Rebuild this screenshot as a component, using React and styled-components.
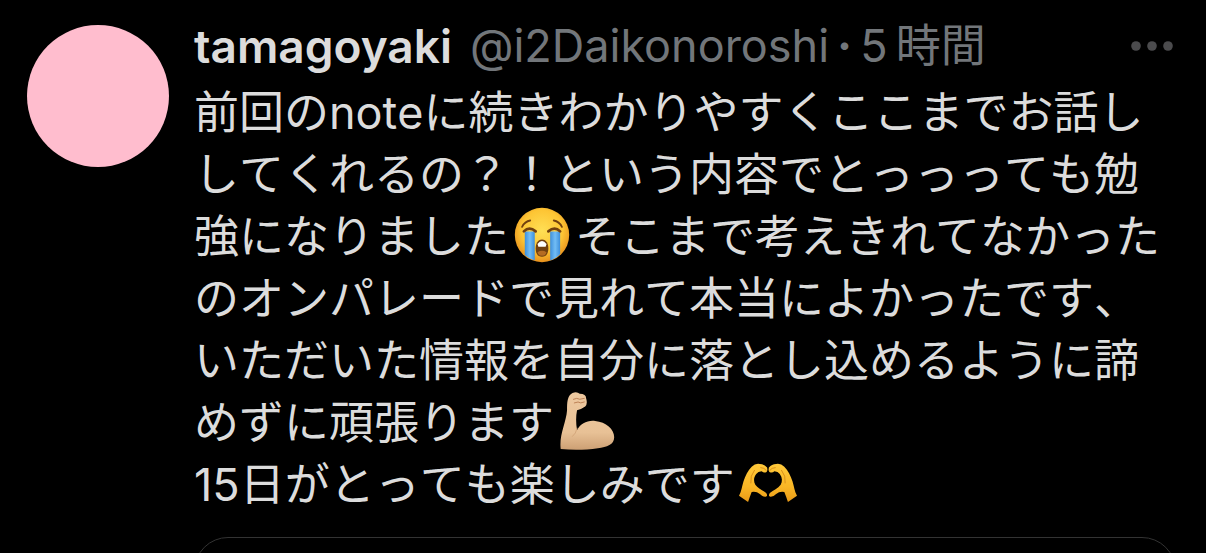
import styled, { createGlobalStyle } from 'styled-components'

const CryingFace = () => (
  <Emoji viewBox="0 0 64 64" role="img" aria-label="大泣き">
    <defs>
      <radialGradient id="face" cx="50%" cy="42%" r="58%">
        <stop offset="0" stopColor="#ffdf55" />
        <stop offset="0.65" stopColor="#fdc534" />
        <stop offset="1" stopColor="#e8901c" />
      </radialGradient>
      <linearGradient id="tear" x1="0" x2="1" y1="0" y2="0">
        <stop offset="0" stopColor="#3d8fdc" />
        <stop offset="0.5" stopColor="#72bdf5" />
        <stop offset="1" stopColor="#3d8fdc" />
      </linearGradient>
    </defs>
    <circle cx="32" cy="32" r="30" fill="url(#face)" />
    <path d="M13 28h11v32q-7-2-11-6z" fill="url(#tear)" />
    <path d="M41 28h11v25q-4 5-11 7z" fill="url(#tear)" />
    <g fill="none" stroke="#71400f" strokeLinecap="round">
      <path d="M10 23q3-6 9-7M54 23q-3-6-9-7" strokeWidth="2" />
      <path d="M12 28q6-6 13 0M39 28q7-6 13 0" strokeWidth="3" />
    </g>
    <path
      d="M32 37c5 0 7 5 7 10s-2 9-7 9-7-4-7-9 2-10 7-10z"
      fill="#71400f"
    />
    <path d="M27 42q5-7 10 0l-1 3h-8z" fill="#fff" />
    <path d="M27 51q5-3 10 0-1 4-5 4t-5-4z" fill="#b56b22" />
  </Emoji>
)

const FlexedArm = () => (
  <Emoji viewBox="0 0 64 64" role="img" aria-label="力こぶ">
    <defs>
      <linearGradient id="skin" x1="0" x2="0" y1="0" y2="1">
        <stop offset="0" stopColor="#edc89f" />
        <stop offset="0.7" stopColor="#e8c196" />
        <stop offset="1" stopColor="#cda074" />
      </linearGradient>
    </defs>
    <path
      d="M10 20C10 12 10 4 16 1q5-2 8 1 7 0 7 5 2 6-1 9-4 3-9 4-2 10 0 22c4-7 11-11 20-10 12 1 21 9 21 18 0 8-8 11-18 12-13 2-28 2-41 1C1 47 9 34 10 20z"
      fill="url(#skin)"
    />
    <path
      d="M17 8q4-2 7 0l5-1M18 12q5-2 7 0l4-1"
      fill="none"
      stroke="#b87c51"
      strokeWidth="1"
      strokeLinecap="round"
    />
    <path
      d="M21 40q-1 6-5 9"
      fill="none"
      stroke="#d2a377"
      strokeWidth="1"
      strokeLinecap="round"
    />
  </Emoji>
)

const HeartHands = () => (
  <Emoji viewBox="0 0 64 64" role="img" aria-label="ハートの手">
    <defs>
      <linearGradient id="hand" x1="0" x2="0" y1="0" y2="1">
        <stop offset="0" stopColor="#ffc93b" />
        <stop offset="0.6" stopColor="#f9b625" />
        <stop offset="1" stopColor="#e99a17" />
      </linearGradient>
      <g id="half">
        <path
          d="M0 46C3 41 3 36 5 30 7 24 10 18 14 14q4-4 9-3 5 0 8 4 1 4-1 5-3 1-5-1-4 0-6 3c-3 4-3 8-1 12 3 4 8 6 12 9q2 3 0 4-3 1-7-3-4-3-9-2-2 5-4 11z"
          fill="url(#hand)"
        />
        <path
          d="M24 15q4 0 6 3M17 18q-5 6-4 14"
          fill="none"
          stroke="#d58a16"
          strokeWidth="1"
          strokeLinecap="round"
        />
      </g>
    </defs>
    <use href="#half" />
    <use href="#half" transform="translate(64 0) scale(-1 1)" />
  </Emoji>
)

const App = () => {
  return (
    <>
      <GlobalStyle />
      <Post>
        <Avatar />
        <Content>
          <Header>
            <Name>tamagoyaki</Name>
            <Meta>@i2Daikonoroshi</Meta>
            <Dot>·</Dot>
            <Meta as="time">5{'\u2009'}時間</Meta>
            <MoreButton aria-label="その他">
              <svg width="42" height="10" viewBox="0 0 42 10">
                <circle cx="5" cy="5" r="4.8" />
                <circle cx="21" cy="5" r="4.8" />
                <circle cx="37" cy="5" r="4.8" />
              </svg>
            </MoreButton>
          </Header>
          <Text>
            前回のnoteに続きわかりやすくここまでお話し
            <br />
            してくれるの？！という内容でとっっっても勉
            <br />
            強になりました
            <CryingFace />
            そこまで考えきれてなかった
            <br />
            のオンパレードで見れて本当によかったです、
            <br />
            いただいた情報を自分に落とし込めるように諦
            <br />
            めずに頑張ります
            <FlexedArm />
            <br />
            15日がとっても楽しみです
            <HeartHands />
          </Text>
          <Card />
        </Content>
      </Post>
    </>
  )
}

const GlobalStyle = createGlobalStyle`
  body {
    margin: 0;
    overflow: hidden;
    background-color: #000;
    color: #dcdcdc;
    font-family: Inter, 'Noto Sans CJK JP', sans-serif;
  }
`

const Post = styled.article`
  display: flex;
  align-items: flex-start;
  gap: 25px;
  padding: 14px 30px 0 27px;
`

const Avatar = styled.div`
  flex: none;
  width: 142px;
  height: 142px;
  margin-top: 11px;
  border-radius: 50%;
  background-color: #ffbdce;
`

const Content = styled.div`
  flex: 1;
  min-width: 0;
`

const Header = styled.header`
  display: flex;
  align-items: center;
  height: 64px;
  font-size: 45px;
  line-height: 64px;
  white-space: nowrap;
`

const Name = styled.span`
  margin-right: 18px;
  font-size: 46px;
  font-weight: 600;
`

const Meta = styled.span`
  color: #72767a;
`

const Dot = styled.span`
  margin: 0 8px;
  color: #72767a;
  font-weight: 700;
`

const MoreButton = styled.button`
  display: flex;
  margin-left: auto;
  padding: 0 3px;
  border: none;
  background: none;
  fill: #4b4b4d;
`

const Text = styled.p`
  margin: 4px 0 0;
  font-size: 45px;
  line-height: 62px;
  font-kerning: none;
  white-space: nowrap;
`

const Emoji = styled.svg`
  width: 58px;
  height: 58px;
  margin: 0 4px;
  vertical-align: -11px;
`

const Card = styled.div`
  height: 120px;
  margin-top: 21px;
  border: 1px solid #333;
  border-radius: 34px;
`

export default App
